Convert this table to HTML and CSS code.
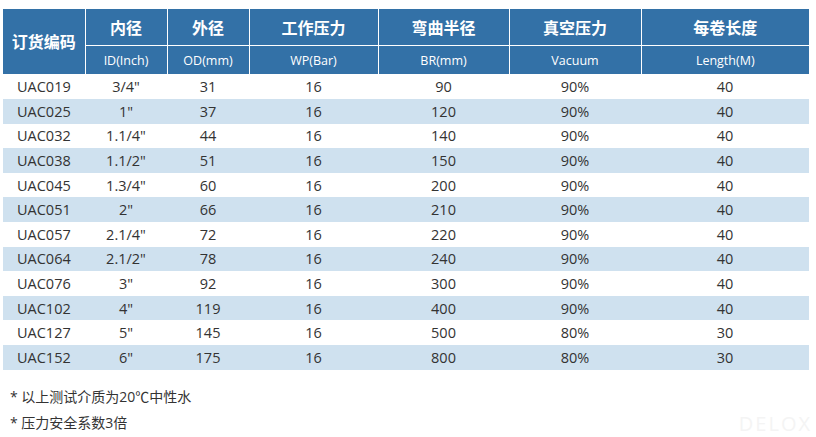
FILE: index.html
```html
<!DOCTYPE html>
<html lang="zh-CN">
<head>
<meta charset="utf-8">
<title>UAC 规格表</title>
<link rel="stylesheet" href="styles.css">
</head>
<body>
<div class="page">
  <table class="spec">
    <colgroup>
      <col class="c1"><col class="c2"><col class="c3"><col class="c4"><col class="c5"><col class="c6"><col class="c7">
    </colgroup>
    <thead>
      <tr class="h1">
        <th rowspan="2" class="code">订货编码</th>
        <th>内径</th><th>外径</th><th>工作压力</th><th>弯曲半径</th><th>真空压力</th><th>每卷长度</th>
      </tr>
      <tr class="h2">
        <th>ID(Inch)</th><th>OD(mm)</th><th>WP(Bar)</th><th>BR(mm)</th><th>Vacuum</th><th>Length(M)</th>
      </tr>
    </thead>
    <tbody>
      <tr><td class="left">UAC019</td><td>3/4"</td><td>31</td><td>16</td><td>90</td><td>90%</td><td>40</td></tr>
      <tr class="alt"><td class="left">UAC025</td><td>1"</td><td>37</td><td>16</td><td>120</td><td>90%</td><td>40</td></tr>
      <tr><td class="left">UAC032</td><td>1.1/4"</td><td>44</td><td>16</td><td>140</td><td>90%</td><td>40</td></tr>
      <tr class="alt"><td class="left">UAC038</td><td>1.1/2"</td><td>51</td><td>16</td><td>150</td><td>90%</td><td>40</td></tr>
      <tr><td class="left">UAC045</td><td>1.3/4"</td><td>60</td><td>16</td><td>200</td><td>90%</td><td>40</td></tr>
      <tr class="alt"><td class="left">UAC051</td><td>2"</td><td>66</td><td>16</td><td>210</td><td>90%</td><td>40</td></tr>
      <tr><td class="left">UAC057</td><td>2.1/4"</td><td>72</td><td>16</td><td>220</td><td>90%</td><td>40</td></tr>
      <tr class="alt"><td class="left">UAC064</td><td>2.1/2"</td><td>78</td><td>16</td><td>240</td><td>90%</td><td>40</td></tr>
      <tr><td class="left">UAC076</td><td>3"</td><td>92</td><td>16</td><td>300</td><td>90%</td><td>40</td></tr>
      <tr class="alt"><td class="left">UAC102</td><td>4"</td><td>119</td><td>16</td><td>400</td><td>90%</td><td>40</td></tr>
      <tr><td class="left">UAC127</td><td>5"</td><td>145</td><td>16</td><td>500</td><td>80%</td><td>30</td></tr>
      <tr class="alt"><td class="left">UAC152</td><td>6"</td><td>175</td><td>16</td><td>800</td><td>80%</td><td>30</td></tr>
    </tbody>
  </table>
  <div class="notes">
    <p>* 以上测试介质为20℃中性水</p>
    <p>* 压力安全系数3倍</p>
  </div>
  <div class="mark">DELOX</div>
</div>
</body>
</html>
```

FILE: styles.css
```css
html, body {
  margin: 0;
  padding: 0;
  background: #ffffff;
}
body {
  font-family: "Open Sans", "Noto Sans CJK SC", sans-serif;
  color: #333333;
}
.page {
  position: relative;
  width: 816px;
  height: 437px;
  padding: 9px 0 0 3px;
  box-sizing: border-box;
  overflow: hidden;
}
.spec {
  width: 806px;
  border-collapse: collapse;
  table-layout: fixed;
}
.c1 { width: 82px; }
.c2 { width: 82px; }
.c3 { width: 82px; }
.c4 { width: 129px; }
.c5 { width: 131px; }
.c6 { width: 132px; }
.c7 { width: 168px; }

.spec th {
  background: #3371a7;
  color: #ffffff;
  border: 1px solid #ffffff;
  padding: 0;
  text-align: center;
}
.spec tr.h1 th {
  height: 36px;
  font-family: "Noto Sans CJK SC", sans-serif;
  font-weight: 700;
  font-size: 16px;
}
.spec tr.h2 th {
  height: 28px;
  font-size: 12.5px;
  font-weight: 400;
}
.spec th.code {
  font-size: 16px;
}
.spec thead tr:first-child th { border-top: 0; }
.spec th:first-child { border-left: 0; }
.spec th:last-child { border-right: 0; }
.spec tr.h2 th { border-bottom: 0; }

.spec td {
  height: 24.6px;
  padding: 0;
  text-align: center;
  font-size: 14.5px;
  color: #333333;
  background: #ffffff;
}
.spec tr.alt td {
  background: #cfe1ef;
}
.spec td.left {
  text-align: left;
  padding-left: 14px;
}
.notes {
  margin-top: 14px;
  padding-left: 7px;
  font-family: "Open Sans", "Noto Sans CJK SC", sans-serif;
  font-size: 14px;
  color: #333333;
}
.notes p {
  margin: 0;
  line-height: 26px;
}
.mark {
  position: absolute;
  right: 4px;
  bottom: 0;
  font-family: "Open Sans", sans-serif;
  font-size: 20px;
  letter-spacing: 2px;
  color: #f4f4f4;
}
```
